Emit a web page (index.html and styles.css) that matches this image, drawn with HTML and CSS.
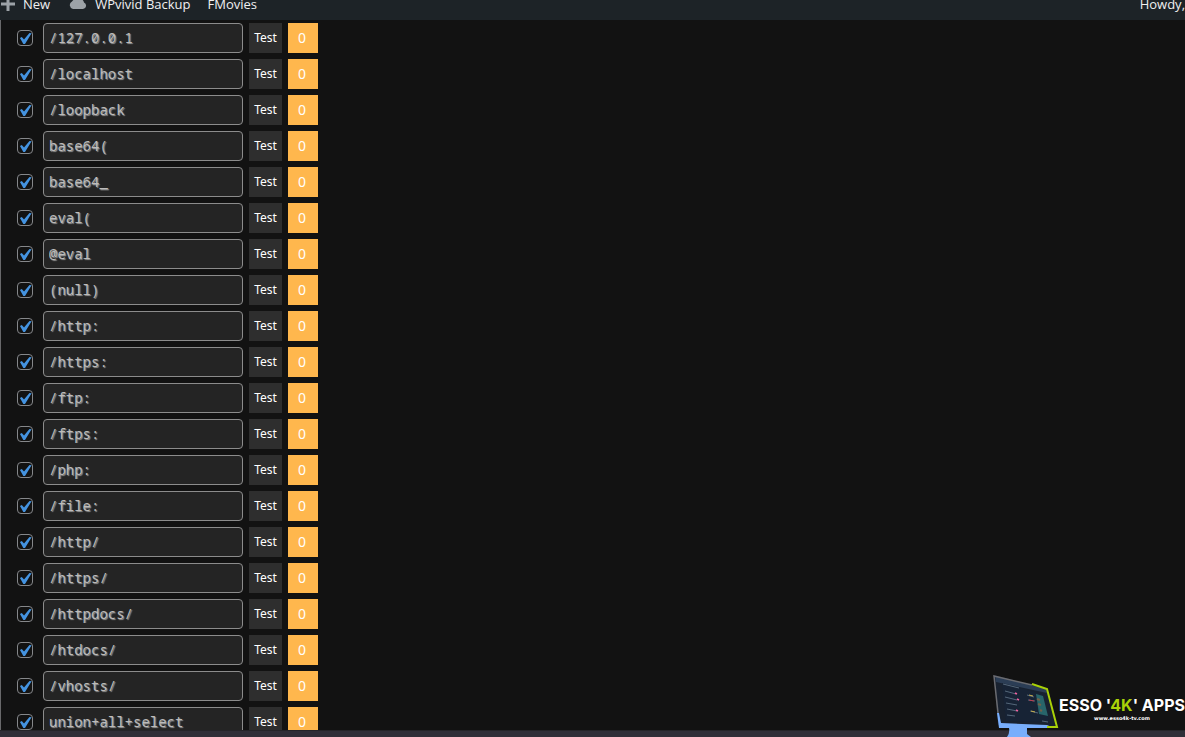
FILE: index.html
```html
<!DOCTYPE html>
<html lang="en">
<head>
<meta charset="utf-8">
<title>Firewall patterns</title>
<link rel="stylesheet" href="styles.css">
<script src="app.js" defer></script>
</head>
<body>
<header class="adminbar">
  <nav class="adminbar-menu">
    <a class="adminbar-link" href="#new"><svg class="plus" viewBox="0 0 14 14" aria-hidden="true"><path d="M5.500 0h3v5.500H14v3H8.500V14h-3V8.500H0v-3h5.500z"/></svg>New</a>
    <a class="adminbar-link" href="#backup"><svg class="cloud" viewBox="0 0 18 12" aria-hidden="true"><path d="M4 11a4 4 0 0 1-1-7.500A4 4 0 0 1 7 1.500a5 5 0 0 1 8 3A3.400 3.400 0 0 1 14 11z"/></svg>WPvivid Backup</a>
    <a class="adminbar-link" href="#fmovies">FMovies</a>
  </nav>
  <a class="adminbar-link" href="#profile">Howdy,</a>
</header>
<main class="content">
  <ul class="patterns"></ul>
</main>
<footer class="statusbar"></footer>
<a class="brand" href="#apps">
  <svg class="brand-screen" viewBox="0 0 66 62" aria-hidden="true">
    <path d="M1 0L54 14 64 53 5 50z" fill="#192230"/>
    <path d="M2 1L53 14 54 18 3 7z" fill="#2b3d55"/>
    <path d="M9 8l40 11 7 28-43-1z" fill="#172335"/>
    <path d="M43 19l7 2 5 20-9-2z" fill="#28656a"/>
    <path d="M44 24l3 1M45 29l3 1M47 35l2 1" stroke="#735f48" stroke-width="2"/>
    <path d="M10 9l16 4M12 16l11 3M12 22l12 3M13 28l11 2M14 34l10 2M14 40l8 1M34 20l7 2M35 25l7 1M37 36l8 2M49 46l6 1" stroke="#64798c" stroke-width=".8" fill="none"/>
    <path d="M22 18l2 1M24 24l2 1M23 35l2 1" stroke="#ef609d" stroke-width="1.500"/>
    <path d="M36 20l4 1M38 36l4 1" stroke="#cbb24d"/>
    <path d="M36 25l5 1" stroke="#bc3d50"/>
    <path d="M39 10L1 1 5 38" fill="none" stroke="#6a6b70" stroke-width="1.500"/>
    <path d="M4 38l2 0 2 10 46 2 7 3H34v6l4 3H14q3-4 2-9H6z" fill="#78aefc"/>
    <path d="M39 9l15 5 10 38H54" fill="none" stroke="#a9d108" stroke-width="2"/>
  </svg>
  <span class="brand-text">
    <span class="brand-name">ESSO '<span class="brand-accent">4K</span>' APPS</span>
    <span class="brand-site">www.esso4k-tv.com</span>
  </span>
</a>
</body>
</html>
```
FILE: styles.css
```css
* { box-sizing: border-box; }
body {
  display: flex;
  flex-direction: column;
  height: 100vh;
  margin: 0;
  overflow: hidden;
  background: #121212;
  color: #fff;
  font: 13px/18px "Noto Sans", sans-serif;
}
a { color: inherit; text-decoration: none; }
.adminbar {
  display: flex;
  flex: none;
  align-items: flex-end;
  justify-content: space-between;
  height: 20px;
  padding-bottom: 7px;
  background: #1d2327;
  color: #f0f0f1;
  font-family: "Open Sans", sans-serif;
}
.adminbar-menu { display: flex; gap: 17px; }
.adminbar-link { display: flex; align-items: center; gap: 8px; white-space: nowrap; }
.plus { width: 14px; height: 14px; margin-left: 1px; fill: #9ca2a7; }
.cloud { width: 18px; height: 12px; margin-left: 2px; fill: #9ca2a7; }
.content {
  flex: 1;
  min-height: 0;
  overflow: hidden;
  border-left: 1px solid #68686a;
}
.patterns {
  display: flex;
  flex-direction: column;
  gap: 6px;
  margin: 0;
  padding: 3px 16px;
  list-style: none;
}
.pattern { display: flex; align-items: center; gap: 6px; }
.pattern-check {
  appearance: none;
  width: 16px;
  height: 16px;
  margin: 0 4px 0 0;
  border: 1px solid #85878a;
  border-radius: 4px;
  background: #121212;
}
.pattern-check:checked::before {
  content: "";
  display: block;
  height: 14px;
  background: #4493e0;
  clip-path: polygon(14% 50%, 27% 43%, 43% 61%, 82% 14%, 97% 16%, 50% 92%, 38% 92%);
}
.pattern-input {
  width: 200px;
  height: 30px;
  padding: 0 5px 2px;
  border: 1px solid #8c8c8c;
  border-radius: 4px;
  background: #242424;
  color: #bcbcbc;
  font: 14px/26px "Noto Sans Mono", "DejaVu Sans Mono", monospace;
  text-shadow: 1px 1px 1px #999;
}
.pattern-test {
  width: 33px;
  height: 30px;
  padding: 0;
  border: 0;
  background: #2e2e2e;
  color: #fff;
  font: 12px/30px "Noto Sans", sans-serif;
}
.pattern-count {
  width: 30px;
  padding-right: 2px;
  background: #ffb74d;
  font-size: 14px;
  line-height: 30px;
  text-align: center;
}
.statusbar { flex: none; height: 7px; border-top: 1px solid #252529; background: #302f38; }
.brand { position: absolute; right: 0; bottom: 0; display: flex; align-items: flex-start; }
.brand-screen { width: 66px; height: 62px; }
.brand-text { display: flex; flex-direction: column; align-items: center; padding-top: 20px; }
.brand-name { font: bold 16px/20px Inter, sans-serif; white-space: nowrap; }
.brand-accent { color: #a9d108; }
.brand-site { font: bold 5px/6px "DejaVu Sans", sans-serif; }
```
FILE: app.js
```js
const patterns = ["/127.0.0.1", "/localhost", "/loopback", "base64(", "base64_", "eval(", "@eval", "(null)", "/http:", "/https:", "/ftp:", "/ftps:", "/php:", "/file:", "/http/", "/https/", "/httpdocs/", "/htdocs/", "/vhosts/", "union+all+select"];

document.querySelector(".patterns").innerHTML = patterns.map((value, i) => `
  <li class="pattern">
    <input class="pattern-check" type="checkbox" id="check-${i}" aria-label="Enable ${value}" checked>
    <input class="pattern-input" type="text" id="pattern-${i}" aria-label="Pattern ${i + 1}" value="${value}" spellcheck="false">
    <button class="pattern-test" type="button">Test</button>
    <output class="pattern-count" for="pattern-${i}">0</output>
  </li>`).join("");
```
